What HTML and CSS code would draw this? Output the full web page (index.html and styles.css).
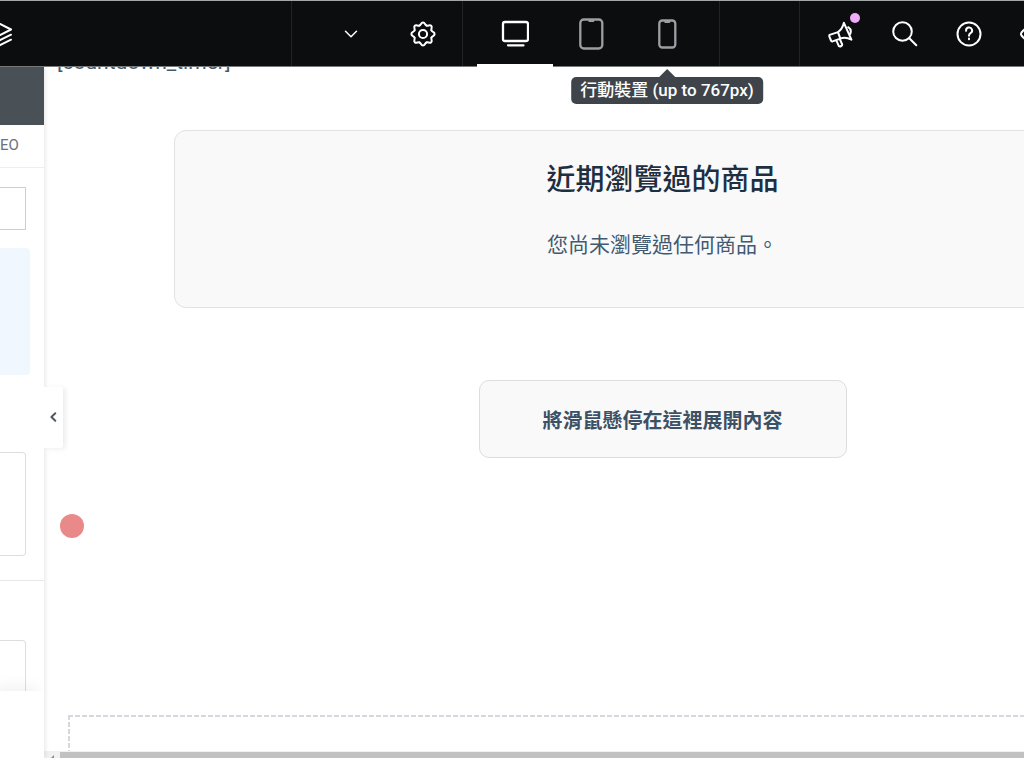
FILE: index.html
```html
<!DOCTYPE html>
<html lang="zh-Hant">
<head>
<meta charset="utf-8">
<meta name="viewport" content="width=device-width, initial-scale=1">
<title>Editor</title>
<link rel="stylesheet" href="styles.css">
</head>
<body>
<div class="editor">
  <header class="topbar">
    <div class="group group-start">
      <button class="tool structure" aria-label="Structure">
        <svg width="26" height="26" viewBox="0 0 26 26"><path d="M2 8.500 13 3 24 8.500 13 14zM2 13.700 13 19.200 24 13.700M2 18.700 13 24.200 24 18.700"/></svg>
      </button>
    </div>
    <div class="group group-page">
      <button class="tool page-tool" aria-label="Document"><svg class="thin" width="14" height="8" viewBox="0 0 14 8"><path d="M1.500 1.200 7 6.700 12.500 1.200"/></svg></button>
      <button class="tool page-tool" aria-label="Settings">
        <svg width="26" height="26" viewBox="-13 -13 26 26">
          <defs><path id="tooth" d="M-3.500-8.500C-1.700-9.200-2.200-11.600 0-11.600S1.700-9.200 3.500-8.500"/></defs>
          <use href="#tooth"/><use href="#tooth" transform="rotate(45)"/><use href="#tooth" transform="rotate(90)"/><use href="#tooth" transform="rotate(135)"/><use href="#tooth" transform="rotate(180)"/><use href="#tooth" transform="rotate(225)"/><use href="#tooth" transform="rotate(270)"/><use href="#tooth" transform="rotate(315)"/>
          <circle r="4.100"/>
        </svg>
      </button>
    </div>
    <div class="group group-devices">
      <button class="tool device active" aria-label="Desktop">
        <svg width="28" height="28" viewBox="0 0 28 28"><rect x="2" y="2" width="25" height="19" rx="2"/><path d="M7 25.300H22.500"/></svg>
      </button>
      <button class="tool device" aria-label="Tablet">
        <svg width="26" height="32" viewBox="0 0 26 32"><rect x="2.300" y="1.500" width="22" height="29" rx="3.500"/><path class="solid" d="M10.300 2h6v1a1 1 0 0 1-1 1h-4a1 1 0 0 1-1-1z"/></svg>
      </button>
      <button class="tool device" aria-label="Mobile" aria-describedby="device-tip">
        <svg width="20" height="30" viewBox="0 0 20 30"><rect x="2.300" y="1.500" width="16" height="27" rx="3"/><path class="solid" d="M7.300 2h6v1a1 1 0 0 1-1 1h-4a1 1 0 0 1-1-1z"/></svg>
        <span class="tooltip" id="device-tip" role="tooltip">行動裝置 (up to 767px)</span>
      </button>
    </div>
    <div class="group group-gap"></div>
    <div class="group group-end">
      <button class="tool utility news" aria-label="What's new">
        <svg width="28" height="28" viewBox="0 0 28 28"><path d="M2.600 14.900 11 12.100 13.300 18.600 5.500 21.400Q4.300 21.600 4 20.500L2.300 16.300Q2.200 15.200 2.600 14.900zM11 12.100Q15.500 9 16.900 2.800L24.400 19.700Q18.500 16.600 13.300 18.600M21.200 7.200A5.500 5.500 0 0 1 23.300 13.800M9.200 20.200 12 26.300Q13 27 14.500 25.900 15.500 25.200 15 24L12.700 18.800"/></svg>
        <span class="badge"></span>
      </button>
      <button class="tool utility" aria-label="Search"><svg width="28" height="28" viewBox="0 0 28 28"><circle cx="11.500" cy="11.500" r="9.300"/><path d="m18.300 18.300 7 7"/></svg></button>
      <button class="tool utility" aria-label="Help"><svg width="28" height="28" viewBox="0 0 28 28"><circle cx="14" cy="14" r="11.500"/><path d="M11.100 10.800A3 3 0 1 1 15.500 13.100Q14 14 14 15.800M14 18.600V19.300"/></svg></button>
      <button class="tool utility" aria-label="Preview"><svg width="28" height="28" viewBox="0 0 28 28"><path d="M2.500 12.500Q8 6 14 6T25.500 12.500Q26.500 14 25.500 15.500 20 22 14 22T2.500 15.500Q1.500 14 2.500 12.500z"/><circle cx="14" cy="14" r="3"/></svg></button>
    </div>
  </header>

  <div class="workspace">
    <aside class="panel">
      <div class="panel-head"></div>
      <nav class="panel-tabs"><a class="tab" href="#seo">EO</a></nav>
      <form class="fields">
        <input class="field" type="text" aria-label="Title">
        <div class="notice"></div>
        <textarea class="field area" aria-label="Description"></textarea>
        <hr class="rule">
        <textarea class="field area" aria-label="Content"></textarea>
      </form>
      <div class="panel-foot"></div>
      <button class="collapse" aria-label="Collapse panel"><svg width="8" height="12" viewBox="0 0 8 12"><path d="M6.300 2.200 2.400 6l3.900 3.800"/></svg></button>
    </aside>

    <main class="preview">
      <div class="page">
        <p class="shortcode">[countdown_timer]</p>
        <section class="recent">
          <h2 class="recent-title">近期瀏覽過的商品</h2>
          <p class="recent-empty">您尚未瀏覽過任何商品。</p>
        </section>
        <button class="expander">將滑鼠懸停在這裡展開內容</button>
        <div class="dropzone"></div>
      </div>
      <div class="scrollbar"><span class="arrow"></span><span class="thumb"></span></div>
      <span class="marker"></span>
    </main>
  </div>
</div>
</body>
</html>
```
FILE: styles.css
```css
* { box-sizing: border-box; }

body {
  margin: 0;
  background: #fff;
  font-family: Roboto, "Noto Sans CJK TC", sans-serif;
}

button {
  border: 0;
  background: none;
  padding: 0;
  font: inherit;
  cursor: pointer;
}

svg {
  display: block;
  fill: none;
  stroke: currentColor;
  stroke-width: 2;
  stroke-linecap: round;
  stroke-linejoin: round;
}

.thin { stroke-width: 1.500; }
.solid { fill: currentColor; stroke: none; }

.editor {
  display: flex;
  flex-direction: column;
  height: 100vh;
  overflow: hidden;
}

/* Top bar */
.topbar {
  position: relative;
  z-index: 2;
  display: flex;
  flex: none;
  height: 67px;
  border-top: 1px solid #a3a7a8;
  border-bottom: 1px solid #77797a;
  background: #0c0d0e;
  color: #fff;
}

.group { display: flex; flex: none; border-right: 1px solid #212326; }
.group-start { flex: 1; }
.group-page { padding: 0 3px 0 23px; }
.group-devices { padding: 0 14px; }
.group-gap { width: 80px; }
.group-end { width: 224px; padding-left: 9px; border: 0; overflow: hidden; }

.tool {
  position: relative;
  display: flex;
  flex: none;
  align-items: center;
  justify-content: center;
  color: #fff;
}

.structure { margin-left: -13px; }
.page-tool { width: 72px; }
.device { width: 76px; color: #9b9fa3; }
.device svg { stroke-width: 2.300; }
.device.active { color: #fff; border-bottom: 3px solid #fff; margin-bottom: -1px; padding-top: 3px; }
.utility { width: 64px; }

.badge {
  position: absolute;
  top: 12px;
  right: 13px;
  width: 10px;
  height: 10px;
  border-radius: 50%;
  background: #f0abfc;
}

.tooltip {
  position: absolute;
  top: 76px;
  left: 50%;
  transform: translateX(-50%);
  padding: 0 9px;
  border-radius: 5px;
  background: #3f444b;
  color: #fff;
  font-size: 17px;
  font-weight: 500;
  line-height: 27px;
  white-space: nowrap;
}

.tooltip::before {
  content: "";
  position: absolute;
  bottom: 100%;
  left: 50%;
  margin-left: -8px;
  border: 8px solid transparent;
  border-top: 0;
  border-bottom-color: #3f444b;
}

/* Side panel */
.workspace { display: flex; flex: 1; min-height: 0; }

.panel {
  position: relative;
  z-index: 1;
  display: flex;
  flex: none;
  flex-direction: column;
  width: 44px;
  background: #fff;
  box-shadow: 1px 0 5px rgba(0, 0, 0, 0.1);
}

.panel-head { flex: none; height: 58px; background: #495157; }

.panel-tabs {
  flex: none;
  height: 43px;
  border-bottom: 1px solid #eeeff1;
  line-height: 39px;
}

.tab { color: #69727d; font-size: 15px; text-decoration: none; }

.fields {
  display: flex;
  flex: 1;
  flex-direction: column;
  min-height: 0;
  overflow: hidden;
  padding-top: 19px;
}

.field {
  display: block;
  flex: none;
  width: 26px;
  height: 43px;
  padding: 0;
  border: 1px solid #ccced1;
  border-left: 0;
  border-radius: 0;
  background: #fff;
  resize: none;
}

.area { height: 104px; border-color: #dddee0; border-radius: 0 4px 4px 0; }

.notice {
  flex: none;
  width: 30px;
  height: 127px;
  margin: 18px 0 77px;
  border-radius: 0 4px 4px 0;
  background: #f0f7ff;
}

.rule {
  flex: none;
  width: 100%;
  height: 1px;
  margin: 24px 0 59px;
  border: 0;
  background: #e6e8ea;
}

.panel-foot {
  position: relative;
  flex: none;
  height: 67px;
  background: #fff;
  box-shadow: -6px -4px 16px rgba(0, 0, 0, 0.06);
  clip-path: inset(-24px 0 0 0);
}

.collapse {
  position: absolute;
  top: 320px;
  left: 100%;
  display: flex;
  align-items: center;
  justify-content: center;
  width: 19px;
  height: 61px;
  padding: 0 2px 2px 0;
  border-radius: 0 3px 3px 0;
  background: #fff;
  color: #515962;
  box-shadow: 3px 1px 5px rgba(0, 0, 0, 0.07);
}

/* Page preview */
.preview {
  position: relative;
  display: flex;
  flex: 1;
  flex-direction: column;
  min-width: 0;
}

.page {
  display: flex;
  flex: 1;
  flex-direction: column;
  align-items: center;
  width: calc(100% + 257px);
  min-height: 0;
  color: #415a72;
  font-size: 20px;
}

.shortcode {
  align-self: flex-start;
  margin: -18px 0 55px 13px;
  font-size: 21px;
  line-height: 26px;
}

.recent {
  width: calc(100% - 260px);
  height: 178px;
  padding: 29px 30px;
  border: 1px solid #e1e2e3;
  border-radius: 12px;
  background: #f9f9f9;
  text-align: center;
}

.recent-title {
  margin: 0 0 29px;
  color: #1e2f42;
  font-size: 29px;
  font-weight: 500;
  line-height: 40px;
}

.recent-empty { margin: 0; font-size: 21px; line-height: 32px; }

.expander {
  margin: 72px 0 257px;
  padding: 26px 63px 22px;
  border: 1px solid #dcddde;
  border-radius: 10px;
  background: #f9f9f9;
  color: #3d5166;
  font-size: 20px;
  font-weight: 700;
  line-height: 28px;
}

.dropzone {
  flex: 1;
  width: calc(100% - 48px);
  background:
    repeating-linear-gradient(90deg, #d5d8dc 0 5px, transparent 5px 7px) top / 100% 2px no-repeat,
    repeating-linear-gradient(#d5d8dc 0 5px, transparent 5px 7px) left / 2px 100% no-repeat;
}

.scrollbar { display: flex; flex: none; height: 7px; background: #f1f1f1; }
.arrow { position: relative; width: 16px; overflow: hidden; }

.arrow::before {
  content: "";
  position: absolute;
  top: 4px;
  left: 6px;
  border: 4px solid transparent;
  border-left: 0;
  border-right-color: #8c8c8c;
}

.thumb { flex: 1; margin-top: 1px; background: #c1c1c1; }

.marker {
  position: absolute;
  top: 447px;
  left: 16px;
  width: 24px;
  height: 24px;
  border-radius: 50%;
  background: #e98989;
}
```
